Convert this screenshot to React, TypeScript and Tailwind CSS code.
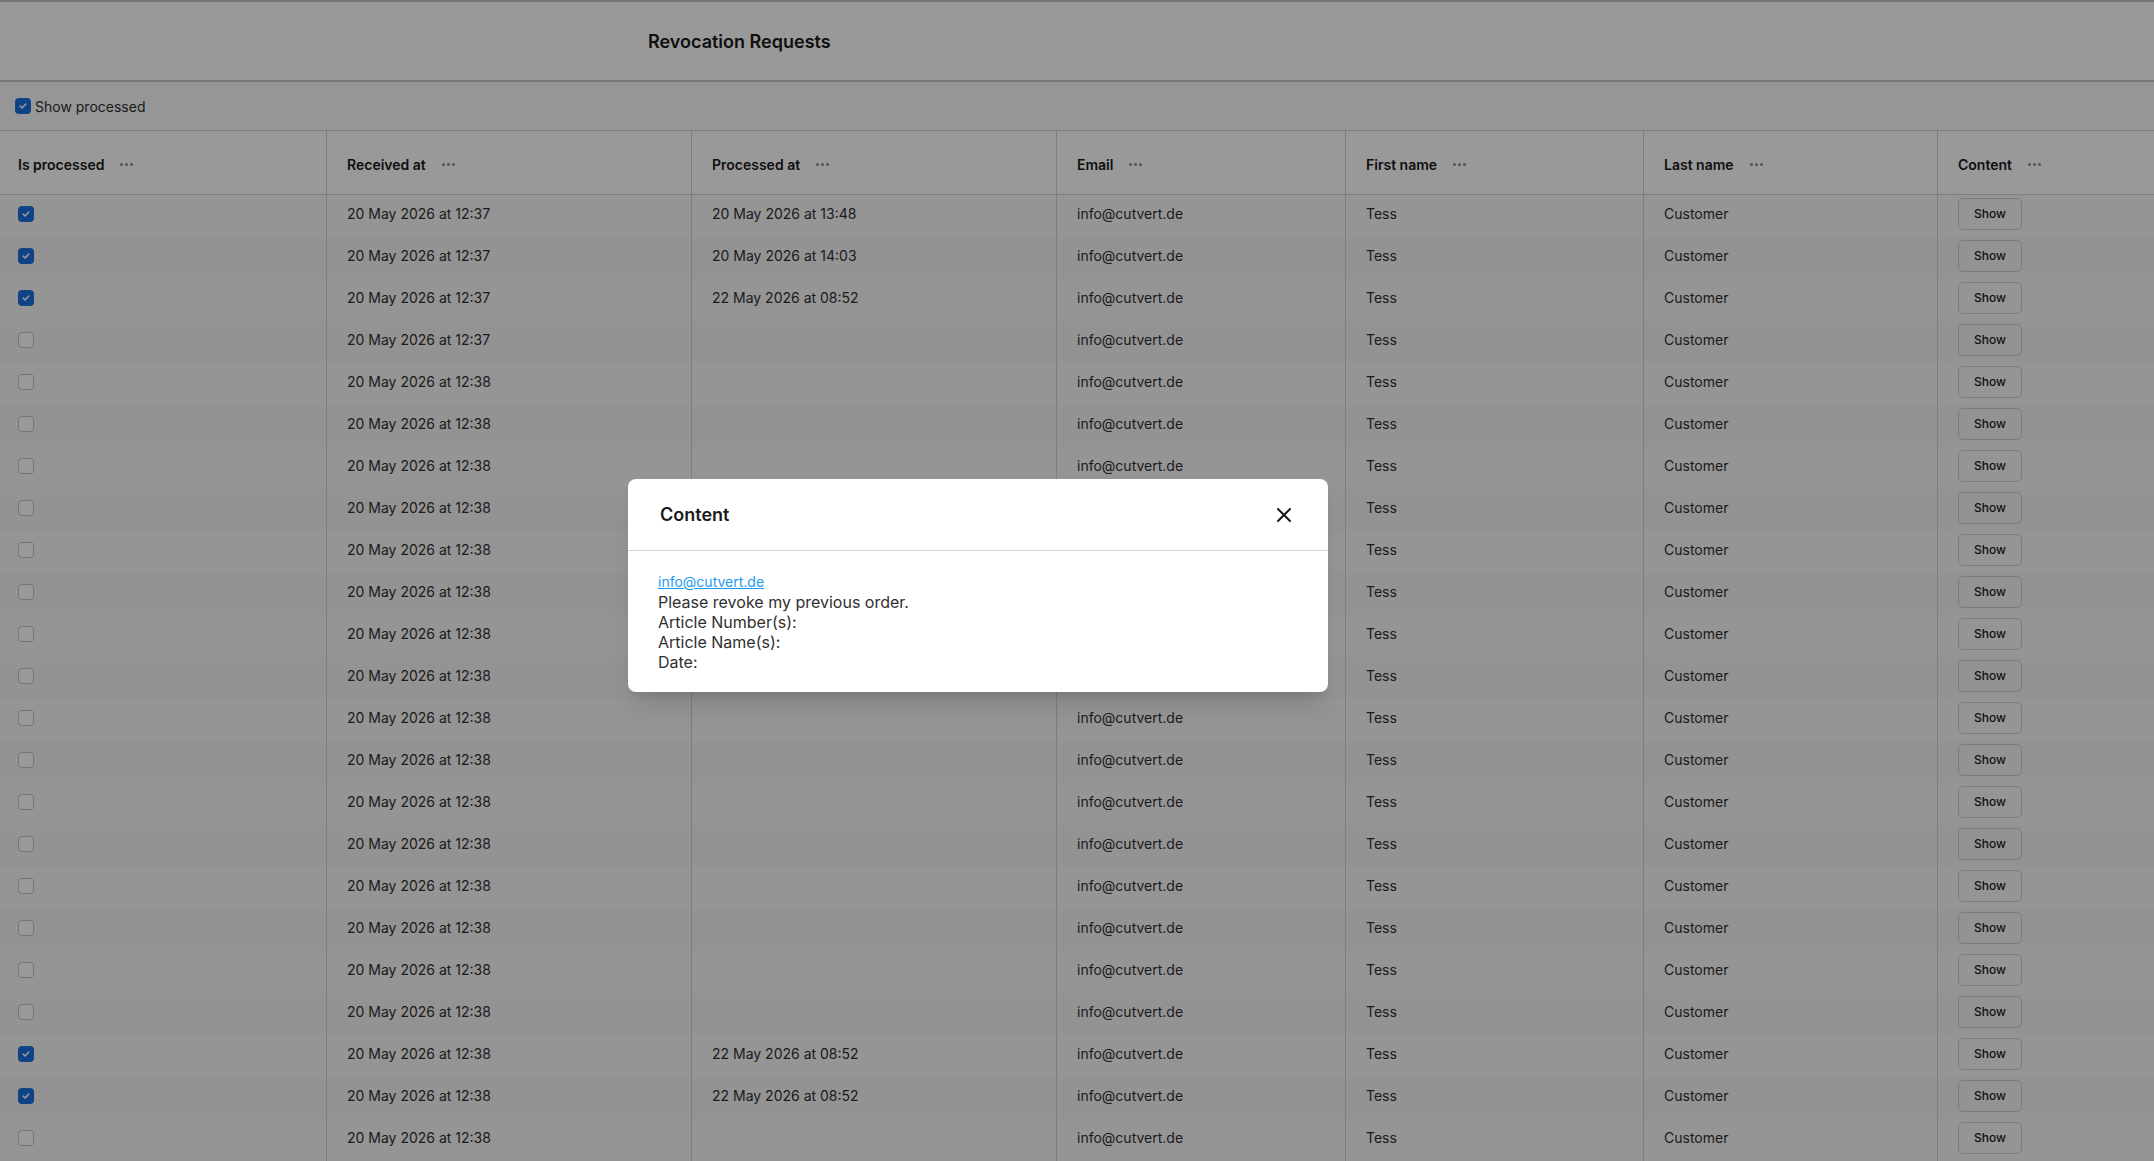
import { X } from "lucide-react";

type Row = { done: boolean; received: string; processed: string };

const rows: Row[] = [
  { done: true, received: "20 May 2026 at 12:37", processed: "20 May 2026 at 13:48" },
  { done: true, received: "20 May 2026 at 12:37", processed: "20 May 2026 at 14:03" },
  { done: true, received: "20 May 2026 at 12:37", processed: "22 May 2026 at 08:52" },
  { done: false, received: "20 May 2026 at 12:37", processed: "" },
  ...Array.from({ length: 16 }, () => ({ done: false, received: "20 May 2026 at 12:38", processed: "" })),
  { done: true, received: "20 May 2026 at 12:38", processed: "22 May 2026 at 08:52" },
  { done: true, received: "20 May 2026 at 12:38", processed: "22 May 2026 at 08:52" },
  { done: false, received: "20 May 2026 at 12:38", processed: "" },
  { done: false, received: "20 May 2026 at 12:38", processed: "" },
];

const columns = ["Is processed", "Received at", "Processed at", "Email", "First name", "Last name", "Content"];

function Checkbox({ checked }: { checked: boolean }) {
  if (!checked) {
    return <span className="block w-4 h-4 rounded-[4px] border border-[#c4c4c4] bg-white" />;
  }
  return (
    <span className="flex items-center justify-center w-4 h-4 rounded-[4px] bg-[#1b6fe0]">
      <svg width="10" height="10" viewBox="0 0 10 10" fill="none">
        <path d="M2.2 5.2 4.1 7 7.8 3" stroke="white" strokeWidth="1.6" strokeLinecap="round" strokeLinejoin="round" />
      </svg>
    </span>
  );
}

function Dots() {
  return (
    <span className="flex items-center gap-[2px] ml-4">
      <span className="w-[3px] h-[3px] rounded-full bg-[#8c8c8c]" />
      <span className="w-[3px] h-[3px] rounded-full bg-[#8c8c8c]" />
      <span className="w-[3px] h-[3px] rounded-full bg-[#8c8c8c]" />
    </span>
  );
}

const grid = "grid grid-cols-[326px_365px_365px_289px_298px_294px_1fr]";
const cell = "flex items-center border-l border-[#d2d2d2] pl-[20px]";

export default function App() {
  return (
    <div className="relative h-[1161px] w-full overflow-hidden bg-white font-['Inter',sans-serif] text-[#303030]">
      {/* page header */}
      <div className="flex h-[82px] items-center border-t-2 border-b-2 border-[#c8c8c8] pl-[648px]">
        <h1 className="text-[18px] font-semibold text-[#1a1a1a]">Revocation Requests</h1>
      </div>

      {/* toolbar */}
      <div className="flex h-[49px] items-center gap-[4px] border-b border-[#cfcfcf] bg-[#fafbfc] pl-[15px]">
        <Checkbox checked />
        <span className="text-[14px] text-[#303030]">Show processed</span>
      </div>

      {/* table */}
      <div className={`${grid} h-[64px] border-b border-[#d2d2d2] bg-white`}>
        {columns.map((c, i) => (
          <div key={c} className={`pt-[3px] ${i === 0 ? "flex items-center pl-[18px]" : cell}`}>
            <span className="text-[14px] font-semibold text-[#1a1a1a]">{c}</span>
            <Dots />
          </div>
        ))}
      </div>

      {rows.map((r, i) => (
        <div key={i} className={`${grid} h-[42px] text-[14px] ${i % 2 === 0 ? "bg-[#f8f8f9]" : "bg-[#f6f6f7]"}`}>
          <div className="flex items-center pl-[18px] pb-[5px]">
            <Checkbox checked={r.done} />
          </div>
          <div className={`${cell} pb-[5px]`}>{r.received}</div>
          <div className={`${cell} pb-[5px]`}>{r.processed}</div>
          <div className={`${cell} pb-[5px]`}>info@cutvert.de</div>
          <div className={`${cell} pb-[5px]`}>Tess</div>
          <div className={`${cell} pb-[5px]`}>Customer</div>
          <div className={`${cell} pb-[4px]`}>
            <button className="h-[32px] w-[64px] rounded-[5px] border border-[#cbcdd0] text-[12px] font-medium text-[#1a1a1a]">
              Show
            </button>
          </div>
        </div>
      ))}

      {/* modal backdrop */}
      <div className="absolute inset-0 bg-black/40" />

      {/* modal */}
      <div className="absolute left-[628px] top-[479px] w-[700px] rounded-lg bg-white shadow-xl">
        <div className="flex h-[71px] items-center justify-between px-[32px]">
          <h2 className="text-[18px] font-semibold text-[#1a1a1a]">Content</h2>
          <X size={24} strokeWidth={2} className="text-[#1a1a1a]" />
        </div>
        <div className="h-px bg-[#d4d4d8]" />
        <div className="px-[30px] pt-[21px] pb-[20px] text-[16px] leading-[20px] text-[#303030]">
          <a className="block text-[14px] text-[#1d9bf0] underline">info@cutvert.de</a>
          <div>Please revoke my previous order.</div>
          <div>Article Number(s):</div>
          <div>Article Name(s):</div>
          <div>Date:</div>
        </div>
      </div>
    </div>
  );
}
